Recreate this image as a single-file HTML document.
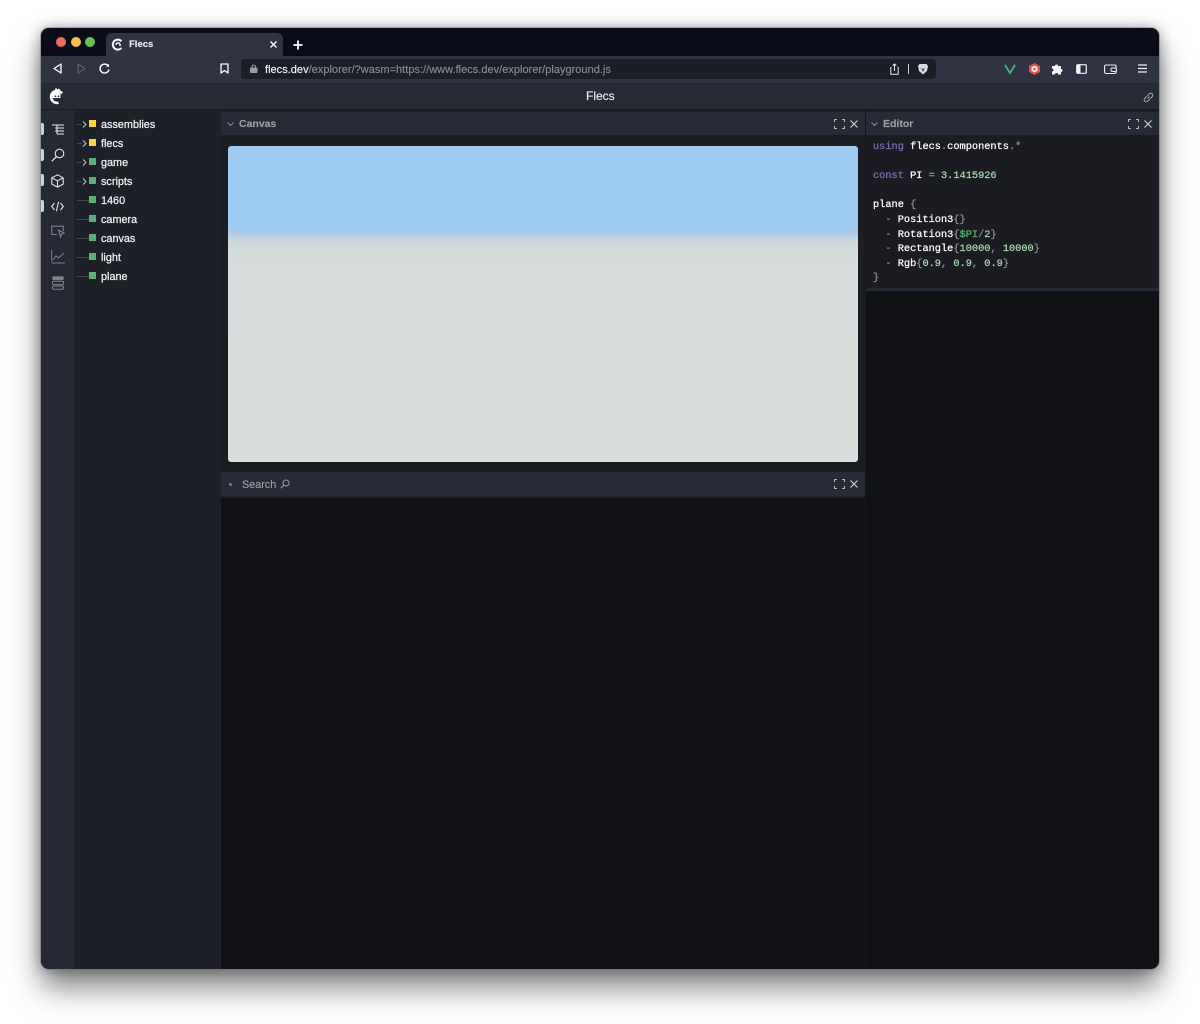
<!DOCTYPE html>
<html><head><meta charset="utf-8"><style>
*{box-sizing:border-box}
html,body{margin:0;padding:0;background:#fff;width:1200px;height:1024px;overflow:hidden}
body{position:relative;font-family:"Liberation Sans",sans-serif}
#all{position:absolute;left:0;top:0;width:1200px;height:1024px;filter:blur(.3px)}
.a{position:absolute}
.t{position:absolute;white-space:pre;line-height:14px;-webkit-text-stroke-width:.15px}
#win{position:absolute;left:41px;top:28px;width:1118px;height:941px;border-radius:8px;overflow:hidden;background:#111216}
#sh{position:absolute;left:41px;top:28px;width:1118px;height:941px;border-radius:8px;box-shadow:0 18px 30px rgba(0,0,0,.5),0 0 14px rgba(0,0,0,.35)}
#edge{position:absolute;left:40px;top:27px;width:1120px;height:943px;border-radius:9px;border:1px solid rgba(120,122,130,.55)}
svg{position:absolute;overflow:visible;fill:none}
.tree{position:absolute;left:101px;font-size:10.85px;color:#f0f1f3;line-height:14px;white-space:pre;-webkit-text-stroke-width:.25px}
.sq{position:absolute;left:89px;width:7px;height:7px}
.ln{position:absolute;left:77px;width:12px;height:1px;background:#444854}
.code{position:absolute;left:873px;font:10.3px/14px "Liberation Mono",monospace;color:#fff;white-space:pre;-webkit-text-stroke-width:.25px}
.k{color:#7d6db5}.p{color:#8c8f98}.n{color:#a8d8b0}.g{color:#55b46f}
.side{position:absolute;left:41px;width:3px;height:12px;background:#b5e2bf;border-radius:0 2px 2px 0}
.hd{position:absolute;background:#262a35}
</style></head><body>
<div id="all">
<div id="sh"></div>
<div id="edge"></div>
<div id="win"></div>

<!-- tab strip -->
<div class="a" style="left:41px;top:28px;width:1118px;height:28px;background:#0b0c19;border-radius:8px 8px 0 0"></div>
<div class="a" style="left:56px;top:37px;width:10px;height:10px;border-radius:50%;background:#ed6a5e"></div>
<div class="a" style="left:71px;top:37px;width:10px;height:10px;border-radius:50%;background:#f4bf4f"></div>
<div class="a" style="left:85px;top:37px;width:10px;height:10px;border-radius:50%;background:#61c554"></div>
<div class="a" style="left:106px;top:33px;width:177px;height:23px;background:#2f3342;border-radius:6px 6px 0 0"></div>
<svg style="left:112px;top:38px" width="12" height="13" viewBox="0 0 12 13"><path d="M9.500 3.200A5 5 0 1 0 9.500 10" stroke="#fff" stroke-width="2"/><path d="M4 7a2.200 2.200 0 0 1 4-1.200" stroke="#fff" stroke-width="1.400"/><circle cx="8" cy="7" r="1" fill="#fff"/></svg>
<div class="t" style="left:129px;top:38px;font-size:9.500px;font-weight:bold;color:#e8e9ec">Flecs</div>
<svg style="left:270px;top:41px" width="7" height="7"><path d="M.5 .5l6 6M6.500 .5l-6 6" stroke="#fff" stroke-width="1.300"/></svg>
<svg style="left:293px;top:40px" width="10" height="10"><path d="M5 .5v9M.5 5h9" stroke="#fff" stroke-width="1.800"/></svg>

<!-- toolbar -->
<div class="a" style="left:41px;top:56px;width:1118px;height:27px;background:#2f3342"></div>
<svg style="left:53px;top:63px" width="9" height="11"><path d="M8 1v9L1 5.500z" stroke="#fff" stroke-width="1.300" stroke-linejoin="round"/></svg>
<svg style="left:77px;top:63px" width="9" height="11"><path d="M1 1v9l7-4.500z" stroke="#5d6170" stroke-width="1.200" stroke-linejoin="round"/></svg>
<svg style="left:99px;top:63px" width="11" height="11"><path d="M9.300 3A4.500 4.500 0 1 0 10 6.500" stroke="#fff" stroke-width="1.400"/><path d="M10 .8V3.700H7.200" fill="#fff"/></svg>
<svg style="left:220px;top:63px" width="9" height="11"><path d="M1 1h7v9L4.500 7.500 1 10z" stroke="#fff" stroke-width="1.300" stroke-linejoin="round"/></svg>
<div class="a" style="left:241px;top:59px;width:695px;height:20px;background:#1b1d27;border-radius:3px"></div>
<svg style="left:250px;top:64px" width="8" height="9"><rect x="0" y="3.500" width="7.500" height="5.500" rx="1" fill="#9b9da5"/><path d="M2 4V2.500a1.800 1.800 0 0 1 3.500 0V4" stroke="#9b9da5"/></svg>
<div class="t" style="left:265px;top:63px;font-size:11px;color:#8a8c94;letter-spacing:.02px"><span style="color:#f2f3f5">flecs.dev</span>/explorer/?wasm=https://www.flecs.dev/explorer/playground.js</div>
<svg style="left:890px;top:63px" width="9" height="12"><path d="M1.500 4.500H.8v6.700h7.400V4.500H7.500M4.500 8V1M2.700 2.700l1.800-1.800 1.800 1.800" stroke="#e8e9ec"/></svg>
<div class="a" style="left:908px;top:64px;width:1px;height:10px;background:#d0d2d6"></div>
<svg style="left:918px;top:63px" width="10" height="12"><path d="M1.500 1h7L10 3 9 8 5 11.500 1 8 0 3z" fill="#d7d8dc"/><path d="M3 5l2 1 2-1-2 4z" fill="#4a4d5c"/></svg>
<svg style="left:1004px;top:64px" width="12" height="10"><path d="M1 1l5 8 5-8" stroke="#41b883" stroke-width="1.800"/></svg>
<svg style="left:1029px;top:63px" width="11" height="12"><path d="M5.500 0L11 3v6l-5.500 3L0 9V3z" fill="#e0524d"/><path d="M5.500 2.500l3 1.700v3.600l-3 1.700-3-1.700V4.200z" fill="#f4e8e8"/><circle cx="5.500" cy="6" r="1.300" fill="#e0524d"/></svg>
<svg style="left:1052px;top:63px" width="11" height="11"><path d="M0 3h3a1.500 1.500 0 0 1 3 0h3v3a1.500 1.500 0 0 1 0 3v2.500H6a1.500 1.500 0 0 0-3 0H0V8.500a1.500 1.500 0 0 0 0-3z" fill="#f2f3f5"/></svg>
<svg style="left:1076px;top:64px" width="11" height="10"><rect x=".7" y=".7" width="9.600" height="8.600" rx="1" stroke="#f2f3f5" stroke-width="1.200"/><rect x="1" y="1" width="3.500" height="8" fill="#f2f3f5"/></svg>
<svg style="left:1104px;top:64px" width="13" height="10"><rect x=".6" y="1" width="11.500" height="8.500" rx="1.500" stroke="#f2f3f5" stroke-width="1.100"/><rect x="7" y="4" width="5.500" height="3.500" rx="1.500" fill="#2f3342" stroke="#f2f3f5"/></svg>
<svg style="left:1138px;top:64px" width="9" height="9"><path d="M0 1h9M0 4.500h9M0 8h9" stroke="#f2f3f5" stroke-width="1.300"/></svg>

<!-- app header -->
<div class="a" style="left:41px;top:83px;width:1118px;height:26px;background:#262a35"></div>
<div class="a" style="left:41px;top:109px;width:1118px;height:1px;background:#181a20"></div>
<svg style="left:49px;top:87px" width="16" height="18" viewBox="0 0 16 18"><path d="M13 6.500A6 6 0 1 0 9.500 15.700" stroke="#fff" stroke-width="2.600"/><path d="M6.500 1.500l2 2.500 2-2" stroke="#fff" stroke-width="1.600"/><path d="M3.500 9a4 4 0 0 1 8-1v3h-8z" fill="#fff"/><circle cx="6.500" cy="9.300" r=".9" fill="#262a35"/><circle cx="9.500" cy="9.300" r=".9" fill="#262a35"/></svg>
<div class="t" style="left:586px;top:89px;font-size:12px;color:#eceef0">Flecs</div>
<svg style="left:1143px;top:92px" width="11" height="11" viewBox="0 0 11 11"><path d="M4.500 6.500l2-2M3.800 4.300L1.800 6.300a2 2 0 0 0 2.900 2.900l2-2M4.300 3.800l2-2a2 2 0 0 1 2.900 2.900l-2 2" stroke="#a9acb4"/></svg>

<!-- icon rail -->
<div class="a" style="left:41px;top:110px;width:33px;height:859px;background:#262933;border-radius:0 0 0 8px"></div>
<div class="side" style="top:123px"></div><div class="side" style="top:149px"></div><div class="side" style="top:174px"></div><div class="side" style="top:200px"></div>
<svg style="left:52px;top:124px" width="12" height="11"><path d="M0 1h12M3 4h9M3 7h9M5 10h7M5 1v9" stroke="#e6e7ea" stroke-width="1.100"/></svg>
<svg style="left:51px;top:148px" width="14" height="14"><circle cx="8.500" cy="5.500" r="4.300" stroke="#e6e7ea" stroke-width="1.100"/><path d="M5.500 8.500L.7 13.300" stroke="#e6e7ea" stroke-width="1.300"/></svg>
<svg style="left:51px;top:174px" width="13" height="14"><path d="M6.500 .8l5.700 3v6.300l-5.700 3-5.700-3V3.800zM.8 3.800l5.700 3 5.700-3M6.500 6.800v6.300" stroke="#e6e7ea" stroke-width="1.100" stroke-linejoin="round"/></svg>
<svg style="left:51px;top:201px" width="13" height="11"><path d="M3.500 2L.7 5.500 3.500 9M9.500 2l2.800 3.500L9.500 9M7.600 .8L5.400 10.200" stroke="#e6e7ea" stroke-width="1.100"/></svg>
<svg style="left:51px;top:225px" width="14" height="14"><path d="M6 9.500H.7V1.200h11.600V6" stroke="#7e818b" stroke-width="1.100"/><path d="M7.500 5l5.500 3-2.300 1-1 3z" stroke="#7e818b" stroke-width="1.100"/></svg>
<svg style="left:51px;top:250px" width="14" height="14"><path d="M.7 0v11.500M.7 13h13M2 10l3-4 2.500 2L13 3" stroke="#7e818b" stroke-width="1"/></svg>
<svg style="left:52px;top:276px" width="12" height="14"><rect x=".5" y=".5" width="11" height="3.300" rx="1" fill="#7e818b" stroke="#7e818b" stroke-width=".5"/><rect x=".5" y="5.300" width="11" height="3.300" rx="1" stroke="#7e818b"/><rect x=".5" y="10" width="11" height="3.300" rx="1" stroke="#7e818b"/></svg>

<!-- tree -->
<div class="a" style="left:74px;top:110px;width:147px;height:859px;background:#1e2028"></div>
<div class="ln" style="top:124px;width:5px"></div><div class="ln" style="top:143px;width:5px"></div><div class="ln" style="top:162px;width:5px"></div><div class="ln" style="top:181px;width:5px"></div>
<svg style="left:82px;top:121px" width="5" height="7"><path d="M1 .5l3 3-3 3" stroke="#c8cad0"/></svg>
<svg style="left:82px;top:140px" width="5" height="7"><path d="M1 .5l3 3-3 3" stroke="#c8cad0"/></svg>
<svg style="left:82px;top:159px" width="5" height="7"><path d="M1 .5l3 3-3 3" stroke="#c8cad0"/></svg>
<svg style="left:82px;top:178px" width="5" height="7"><path d="M1 .5l3 3-3 3" stroke="#c8cad0"/></svg>
<div class="ln" style="top:200px"></div><div class="ln" style="top:219px"></div><div class="ln" style="top:238px"></div><div class="ln" style="top:257px"></div><div class="ln" style="top:276px"></div>
<div class="sq" style="top:120px;background:#f8d53c"></div><div class="sq" style="top:139px;background:#f8d53c"></div>
<div class="sq" style="top:158px;background:#5cb077"></div><div class="sq" style="top:177px;background:#5cb077"></div><div class="sq" style="top:196px;background:#5cb077"></div><div class="sq" style="top:215px;background:#5cb077"></div><div class="sq" style="top:234px;background:#5cb077"></div><div class="sq" style="top:253px;background:#5cb077"></div><div class="sq" style="top:272px;background:#5cb077"></div>
<div class="tree" style="top:117.500px">assemblies</div>
<div class="tree" style="top:136.500px">flecs</div>
<div class="tree" style="top:155.500px">game</div>
<div class="tree" style="top:174.500px">scripts</div>
<div class="tree" style="top:193.500px">1460</div>
<div class="tree" style="top:212.500px">camera</div>
<div class="tree" style="top:231.500px">canvas</div>
<div class="tree" style="top:250.500px">light</div>
<div class="tree" style="top:269.500px">plane</div>

<!-- canvas panel -->
<div class="a" style="left:221px;top:110px;width:644px;height:360px;background:#1b1d23"></div>
<div class="hd" style="left:221px;top:112px;width:644px;height:23px"></div>
<svg style="left:227px;top:122px" width="7" height="4"><path d="M.5 .5l3 3 3-3" stroke="#8b8e98"/></svg>
<div class="t" style="left:239px;top:117px;font-size:10.500px;font-weight:bold;color:#9a9da6">Canvas</div>
<svg style="left:834px;top:119px" width="11" height="10"><path d="M.5 3V.5H3M8 .5h2.500V3M10.500 7v2.500H8M3 9.500H.5V7" stroke="#b9bbc2"/></svg>
<svg style="left:850px;top:120px" width="8" height="8"><path d="M.5 .5l7 7M7.500 .5l-7 7" stroke="#d0d2d7" stroke-width="1.100"/></svg>
<div class="a" style="left:228px;top:146px;width:630px;height:316px;border-radius:3px;background:linear-gradient(#9fcaf0 0,#9fcaf0 82px,#a7cbea 87px,#c3d4e0 92px,#d0d9dc 98px,#d7dddc 112px,#d8dedb 100%)"></div>

<!-- search panel -->
<div class="a" style="left:221px;top:470px;width:644px;height:2px;background:#1b1d23"></div>
<div class="hd" style="left:221px;top:472px;width:644px;height:24px"></div>
<div class="a" style="left:221px;top:496px;width:644px;height:2px;background:#1e2028"></div>
<div class="a" style="left:229px;top:483px;width:3px;height:3px;border-radius:50%;background:#7a7d87"></div>
<div class="t" style="left:242px;top:477.500px;font-size:10.800px;color:#9a9da6">Search</div>
<svg style="left:280px;top:479px" width="10" height="10"><circle cx="6" cy="4" r="3" stroke="#9a9da6"/><path d="M3.800 6.200L.8 9.200" stroke="#9a9da6" stroke-width="1.100"/></svg>
<svg style="left:834px;top:479px" width="11" height="10"><path d="M.5 3V.5H3M8 .5h2.500V3M10.500 7v2.500H8M3 9.500H.5V7" stroke="#b9bbc2"/></svg>
<svg style="left:850px;top:480px" width="8" height="8"><path d="M.5 .5l7 7M7.500 .5l-7 7" stroke="#d0d2d7" stroke-width="1.100"/></svg>

<!-- editor panel -->
<div class="a" style="left:865px;top:110px;width:1px;height:859px;background:#16171c"></div>
<div class="a" style="left:866px;top:110px;width:293px;height:178px;background:#1b1c21"></div>
<div class="hd" style="left:866px;top:112px;width:293px;height:23px"></div>
<div class="a" style="left:866px;top:288px;width:293px;height:3px;background:#262a35"></div>
<svg style="left:871px;top:122px" width="7" height="4"><path d="M.5 .5l3 3 3-3" stroke="#8b8e98"/></svg>
<div class="t" style="left:883px;top:117px;font-size:10.500px;font-weight:bold;color:#9a9da6">Editor</div>
<svg style="left:1128px;top:119px" width="11" height="10"><path d="M.5 3V.5H3M8 .5h2.500V3M10.500 7v2.500H8M3 9.500H.5V7" stroke="#b9bbc2"/></svg>
<svg style="left:1144px;top:120px" width="8" height="8"><path d="M.5 .5l7 7M7.500 .5l-7 7" stroke="#d0d2d7" stroke-width="1.100"/></svg>
<div class="code" style="top:140px"><span class="k">using</span> flecs<span class="p">.</span>components<span class="p">.*</span></div>
<div class="code" style="top:169px"><span class="k">const</span> PI <span class="p">=</span> <span class="n">3.1415926</span></div>
<div class="code" style="top:198px">plane <span class="p">{</span></div>
<div class="code" style="top:213px">  <span class="p">-</span> Position3<span class="p">{}</span></div>
<div class="code" style="top:228px">  <span class="p">-</span> Rotation3<span class="p">{</span><span class="g">$PI</span><span class="p">/</span><span class="n">2</span><span class="p">}</span></div>
<div class="code" style="top:242px">  <span class="p">-</span> Rectangle<span class="p">{</span><span class="n">10000</span><span class="p">,</span> <span class="n">10000</span><span class="p">}</span></div>
<div class="code" style="top:257px">  <span class="p">-</span> Rgb<span class="p">{</span><span class="n">0.9</span><span class="p">,</span> <span class="n">0.9</span><span class="p">,</span> <span class="n">0.9</span><span class="p">}</span></div>
<div class="code" style="top:271px"><span class="p">}</span></div>
</div>
</body></html>
